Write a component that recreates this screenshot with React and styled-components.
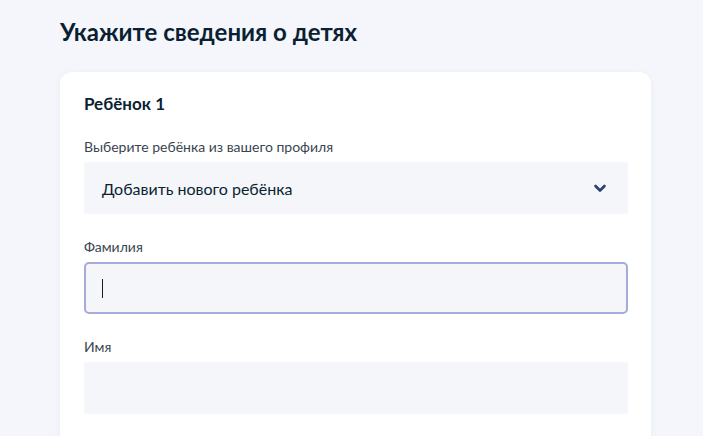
import React from "react";
import styled, { createGlobalStyle } from "styled-components";

const GlobalStyle = createGlobalStyle`
  body {
    margin: 0;
    background: #f4f6fb;
    font-family: Lato, "Noto Sans", sans-serif;
    color: #0b1f33;
  }
`;

const Page = styled.div`
  padding: 15px 52px 0 60px;
  height: 436px;
  overflow: hidden;
  box-sizing: border-box;
`;

const Title = styled.h1`
  margin: 0;
  font-size: 24px;
  line-height: 34px;
  font-weight: 700;
  color: #0b1f33;
`;

const Card = styled.section`
  margin-top: 23px;
  width: 591px;
  box-sizing: border-box;
  background: #fff;
  border-radius: 12px;
  box-shadow: 0 1px 6px rgba(30, 60, 140, 0.05);
  padding: 20px 23px 40px 24px;
`;

const CardTitle = styled.h2`
  margin: 0;
  font-size: 17px;
  line-height: 24px;
  font-weight: 700;
  color: #0b1f33;
`;

const Field = styled.div`
  margin-top: ${(p) => (p.first ? "22px" : "24px")};
  display: flex;
  flex-direction: column;
  gap: 6px;
`;

const Label = styled.label`
  font-size: 14px;
  line-height: 18px;
  color: #3a4551;
`;

const Box = styled.div`
  height: 52px;
  box-sizing: border-box;
  background: #f5f6f9;
  border: 2px solid ${(p) => (p.focused ? "#a5acdb" : "transparent")};
  border-radius: ${(p) => (p.focused ? "5px" : "2px")};
  display: flex;
  align-items: center;
  justify-content: space-between;
  padding: 0 16px;
  font-size: 16px;
  color: #0b1f33;
`;

const Caret = styled.span`
  width: 1px;
  height: 19px;
  background: #0b1f33;
`;

const Chevron = () => (
  <svg width="14" height="10" viewBox="0 0 14 10" style={{ marginRight: 3 }}>
    <path d="M2.5 3 L7 7.5 L11.5 3" fill="none" stroke="#2b3e72" strokeWidth="2.6" strokeLinecap="round" strokeLinejoin="round" />
  </svg>
);

export default function App() {
  return (
    <Page>
      <GlobalStyle />
      <Title>Укажите сведения о детях</Title>
      <Card>
        <CardTitle>Ребёнок 1</CardTitle>
        <Field first>
          <Label>Выберите ребёнка из вашего профиля</Label>
          <Box>
            <span>Добавить нового ребёнка</span>
            <Chevron />
          </Box>
        </Field>
        <Field>
          <Label>Фамилия</Label>
          <Box focused>
            <Caret />
          </Box>
        </Field>
        <Field>
          <Label>Имя</Label>
          <Box />
        </Field>
      </Card>
    </Page>
  );
}
